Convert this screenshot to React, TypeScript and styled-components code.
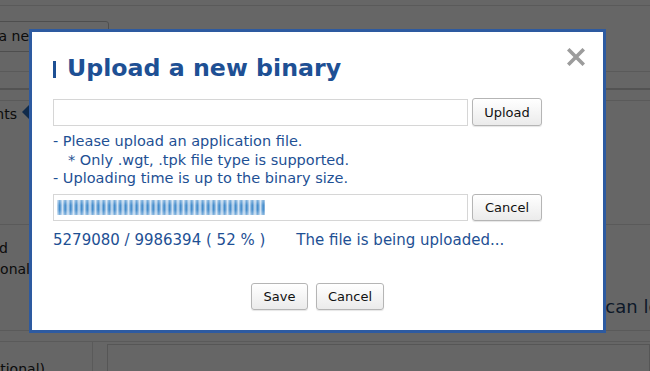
import React from 'react';
import styled, { createGlobalStyle } from 'styled-components';

const GlobalStyle = createGlobalStyle`
    html, body {
        margin: 0;
        padding: 0;
        background: #ffffff;
    }
    body {
        font-family: 'DejaVu Sans', Verdana, sans-serif;
    }
`;

export default function App() {
    return (
        <>
            <GlobalStyle />
            <Page>
                <Row $h={5} />
                <Row $h={65}>
                    <NewButton>Add a new</NewButton>
                </Row>
                <Row $h={16} $dark />
                <Row $h={10} />
                <Section $h={123}>
                    <Label $end={17} $top={3}>
                        Attachments
                    </Label>
                    <Caret />
                </Section>
                <Section $h={105}>
                    <LabelStack>
                        <Label $end={8} $top={13}>
                            Required
                        </Label>
                        <Label $end={30} $top={0}>
                            Additional
                        </Label>
                    </LabelStack>
                    <Hint>Users who can log in</Hint>
                </Section>
                <Row $h={10} />
                <Section $h={40} $split>
                    <LabelCell>
                        <Label $end={45} $top={17}>
                            (Optional)
                        </Label>
                    </LabelCell>
                    <InputBox />
                </Section>
                <Overlay>
                    <Modal>
                        <CloseButton viewBox="0 0 18 18">
                            <path d="M2.5 2.5 L15.5 15.5 M15.5 2.5 L2.5 15.5" />
                        </CloseButton>
                        <Title>
                            <TitleBar />
                            Upload a new binary
                        </Title>
                        <FieldRow $top={15}>
                            <FileInput />
                            <Button $w={70} $h={28}>
                                Upload
                            </Button>
                        </FieldRow>
                        <Notes>
                            <Note>- Please upload an application file.</Note>
                            <Note $indent>* Only .wgt, .tpk file type is supported.</Note>
                            <Note>- Uploading time is up to the binary size.</Note>
                        </Notes>
                        <FieldRow $top={6}>
                            <FileInput>
                                <Progress style={{ width: '208px' }} />
                            </FileInput>
                            <Button $w={70} $h={27}>
                                Cancel
                            </Button>
                        </FieldRow>
                        <Status>
                            <span>5279080 / 9986394 ( 52 % )</span>
                            <span>The file is being uploaded...</span>
                        </Status>
                        <Footer>
                            <Button $w={57} $h={27}>
                                Save
                            </Button>
                            <Button $w={68} $h={27}>
                                Cancel
                            </Button>
                        </Footer>
                    </Modal>
                </Overlay>
            </Page>
        </>
    );
}

const Page = styled.div`
    position: relative;
    width: 650px;
    height: 371px;
    overflow: hidden;
    background: #ffffff;
    color: #222;
    font-size: 14px;
`;

const Row = styled.div<{ $h: number; $dark?: boolean }>`
    height: ${(p) => p.$h}px;
    border-bottom: ${(p) => (p.$dark ? '2px solid #cfcfcf' : '1px solid #e2e2e2')};
    display: flex;
`;

const Section = styled.div<{ $h: number; $split?: boolean }>`
    height: ${(p) => p.$h}px;
    border-bottom: 1px solid #e2e2e2;
    display: flex;
    align-items: flex-start;
    position: relative;
`;

const NewButton = styled.div`
    margin: 15px 0 0 -18px;
    width: 127px;
    height: 31px;
    box-sizing: border-box;
    border: 1px solid #c4c4c4;
    border-radius: 3px;
    font-size: 14px;
    line-height: 29px;
    white-space: nowrap;
    overflow: hidden;
    color: #222;
    text-indent: -16px;
`;

const Label = styled.div<{ $end: number; $top: number }>`
    width: ${(p) => p.$end}px;
    margin-top: ${(p) => p.$top}px;
    display: flex;
    justify-content: flex-end;
    white-space: nowrap;
    font-size: 14px;
    line-height: 21px;
    color: #222;
`;

const LabelStack = styled.div`
    display: flex;
    flex-direction: column;
`;

const LabelCell = styled.div`
    width: 92px;
    height: 100%;
    border-right: 1px solid #e2e2e2;
    flex-shrink: 0;
`;

const Caret = styled.span`
    margin: 4px 0 0 5px;
    width: 0;
    height: 0;
    border-top: 7px solid transparent;
    border-bottom: 7px solid transparent;
    border-right: 7px solid #2a6ab8;
`;

const Hint = styled.div`
    margin: 71px -43px 0 auto;
    font-size: 18px;
    color: #1f3f66;
    white-space: nowrap;
`;

const InputBox = styled.div`
    margin: 2px 0 0 14px;
    flex: 1;
    height: 26px;
    border: 1px solid #d6d6d6;
`;

const Overlay = styled.div`
    position: absolute;
    inset: 0;
    background: rgba(0, 0, 0, 0.6);
    padding: 29px 0 0 29px;
`;

const Modal = styled.div`
    position: relative;
    width: 577px;
    height: 304px;
    box-sizing: border-box;
    background: #ffffff;
    border: 3px solid #2d5aa0;
    padding: 21px 21px 0 21px;
    display: flex;
    flex-direction: column;
`;

const CloseButton = styled.svg`
    position: absolute;
    top: 16px;
    right: 18px;
    width: 18px;
    height: 18px;
    fill: none;
    stroke: #9c9c9c;
    stroke-width: 3.6;
    stroke-linecap: square;
`;

const Title = styled.h1`
    margin: 0;
    display: flex;
    align-items: center;
    gap: 11px;
    font-size: 23.7px;
    font-weight: bold;
    color: #1e5094;
    line-height: 30px;
`;

const TitleBar = styled.span`
    width: 3px;
    height: 17px;
    background: #1e5094;
    margin-top: 2px;
`;

const FieldRow = styled.div<{ $top: number }>`
    display: flex;
    align-items: center;
    gap: 4px;
    margin-top: ${(p) => p.$top}px;
`;

const FileInput = styled.div`
    width: 415px;
    height: 27px;
    box-sizing: border-box;
    border: 1px solid #d6d6d6;
    padding: 4px 3px;
    display: flex;
    align-items: center;
`;

const Progress = styled.div`
    height: 15px;
    background:
        linear-gradient(
            rgba(255, 255, 255, 0.35),
            rgba(255, 255, 255, 0) 35%,
            rgba(255, 255, 255, 0) 65%,
            rgba(255, 255, 255, 0.35)
        ),
        repeating-linear-gradient(90deg, #cfe1f2 0px, #3a86c9 2.7px, #cfe1f2 5.5px);
`;

const Button = styled.div<{ $w: number; $h: number }>`
    width: ${(p) => p.$w}px;
    height: ${(p) => p.$h}px;
    box-sizing: border-box;
    border: 1px solid #b5b5b5;
    border-radius: 3px;
    background: linear-gradient(#ffffff, #ebebeb);
    box-shadow: 0 1px 1px rgba(0, 0, 0, 0.1);
    font-family: 'DejaVu Sans', Verdana, sans-serif;
    font-size: 13px;
    color: #111;
    display: flex;
    align-items: center;
    justify-content: center;
`;

const Notes = styled.div`
    margin-top: 6px;
    display: flex;
    flex-direction: column;
`;

const Note = styled.div<{ $indent?: boolean }>`
    font-size: 14.5px;
    line-height: 18.5px;
    color: #1e5094;
    padding-left: ${(p) => (p.$indent ? '15px' : '0')};
    white-space: pre;
`;

const Status = styled.div`
    margin-top: 10px;
    display: flex;
    gap: 31px;
    font-size: 15px;
    line-height: 18px;
    color: #1e5094;
    white-space: nowrap;
`;

const Footer = styled.div`
    margin-top: 34px;
    display: flex;
    justify-content: center;
    gap: 8px;
`;
